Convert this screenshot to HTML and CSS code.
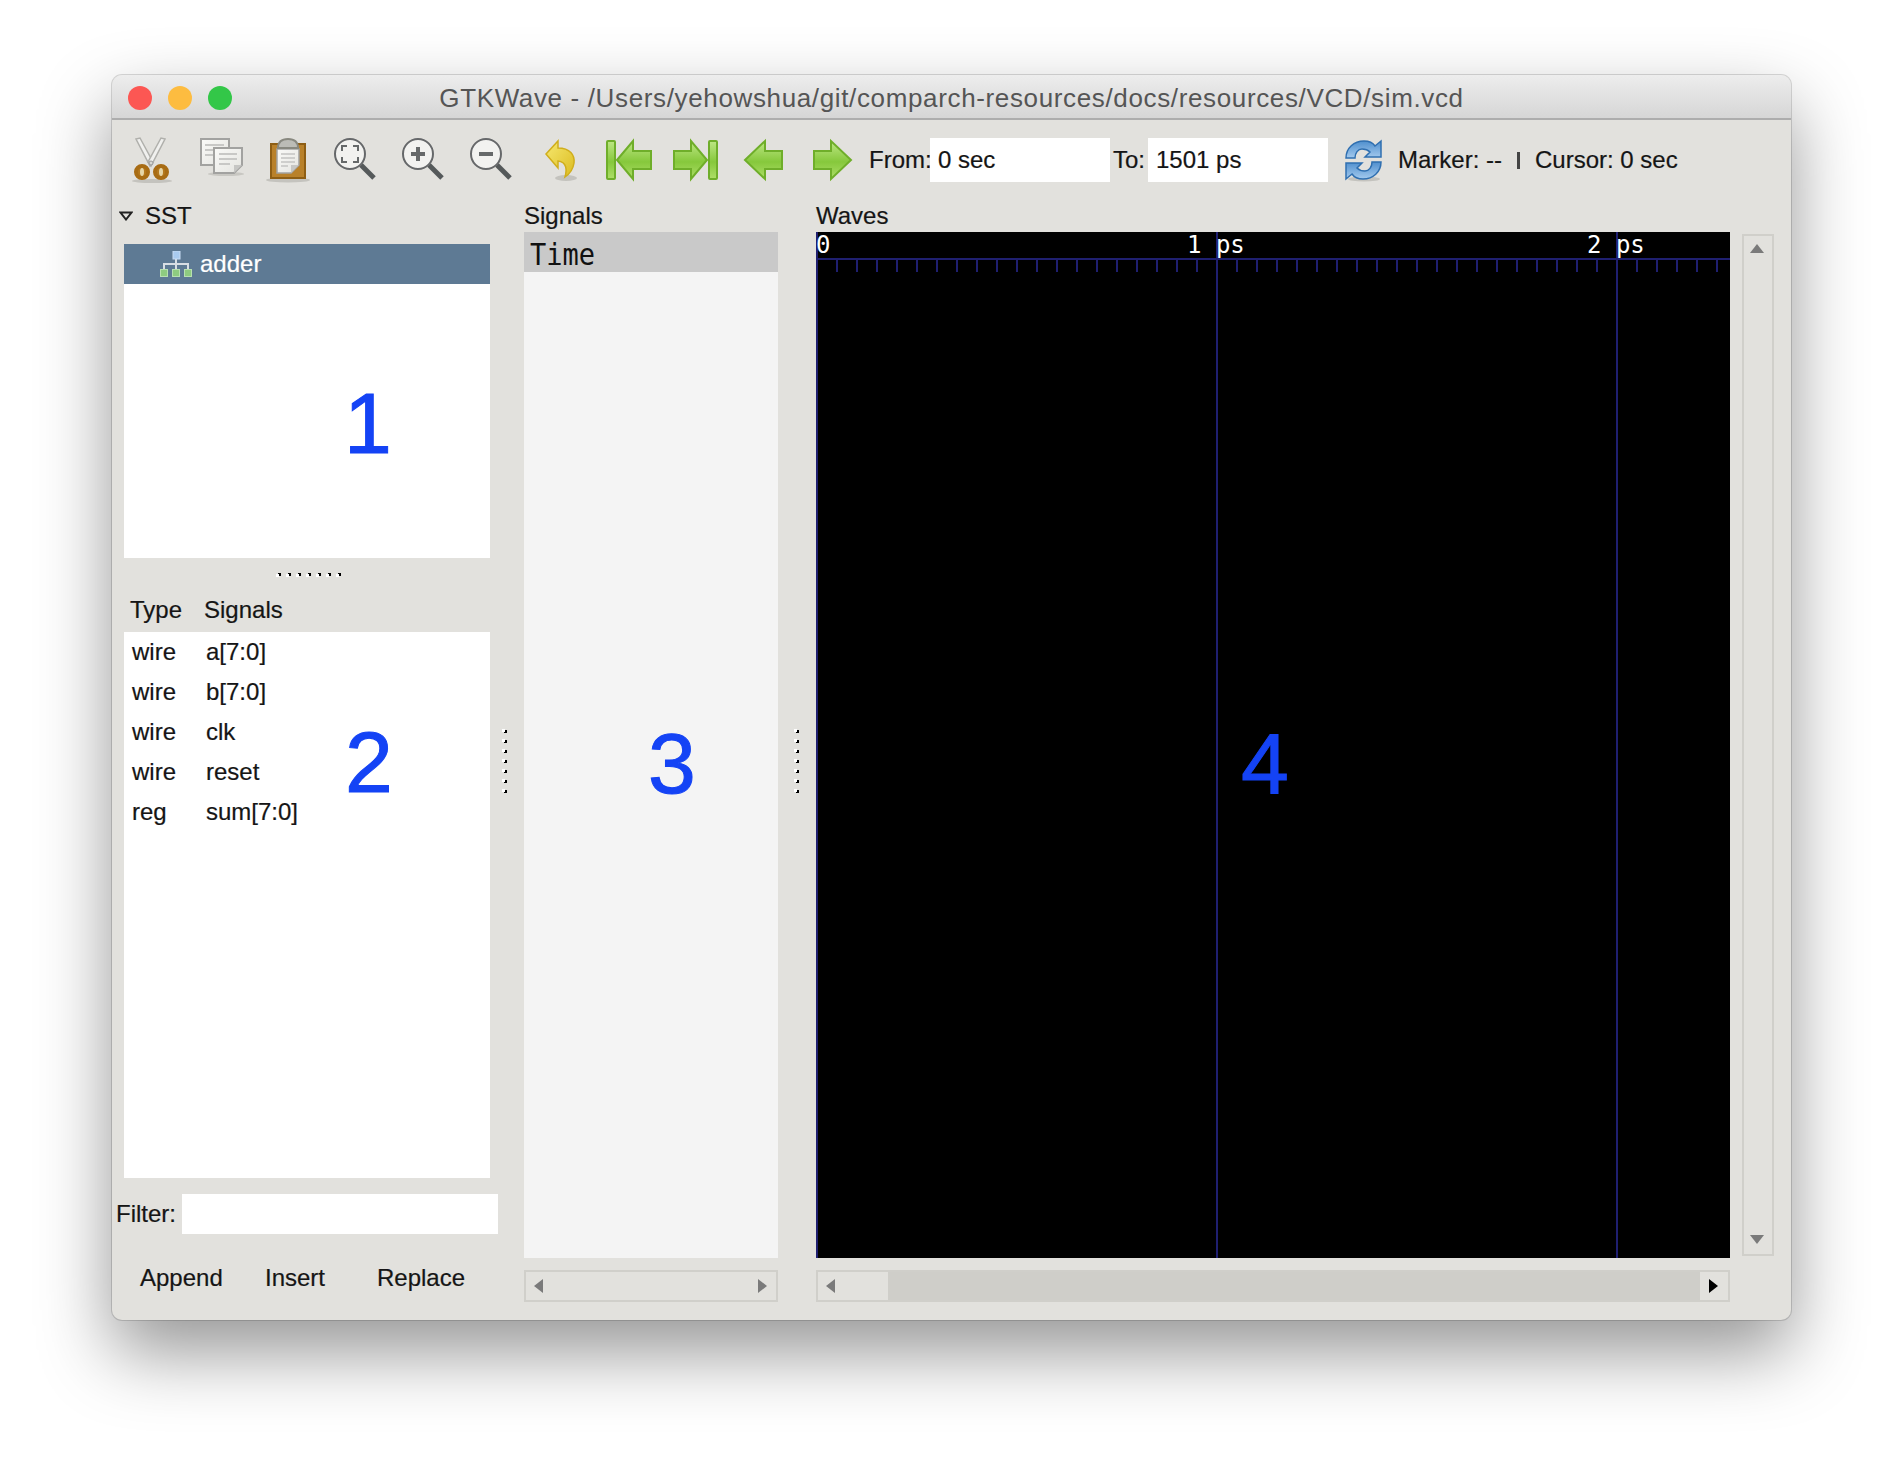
FILE: index.html
```html
<!DOCTYPE html>
<html>
<head>
  <title>GTKWave</title>
  <link rel="stylesheet" href="styles.css">
</head>
<body>
  <svg class="defs" width="0" height="0">
    <defs>
      <linearGradient id="green" x1="0" y1="0" x2="0" y2="1">
        <stop offset="0" stop-color="#bde684"/>
        <stop offset="0.55" stop-color="#86c83c"/>
        <stop offset="1" stop-color="#aede68"/>
      </linearGradient>
      <linearGradient id="yellow" x1="0" y1="0" x2="1" y2="1">
        <stop offset="0" stop-color="#f6e870"/>
        <stop offset="1" stop-color="#dcbc20"/>
      </linearGradient>
      <linearGradient id="blue" x1="0" y1="0" x2="0" y2="1">
        <stop offset="0" stop-color="#4f8fce"/>
        <stop offset="1" stop-color="#a4caee"/>
      </linearGradient>
      <linearGradient id="paper" x1="0" y1="0" x2="1" y2="1">
        <stop offset="0" stop-color="#fafaf8"/>
        <stop offset="1" stop-color="#e4e4e0"/>
      </linearGradient>
    </defs>
  </svg>

  <div class="window">
    <div class="titlebar">
      <div class="lights">
        <span class="light red"></span>
        <span class="light orange"></span>
        <span class="light green"></span>
      </div>
      <div class="title">GTKWave - /Users/yehowshua/git/comparch-resources/docs/resources/VCD/sim.vcd</div>
    </div>

    <div class="toolbar">
      <!-- cut -->
      <svg class="tool" viewBox="0 0 68 48">
        <ellipse cx="36" cy="45" rx="20" ry="2" fill="#c4c3be"/>
        <path d="M20 3 L24 2 L37 26 L34 30 Z" fill="#f0f0ee" stroke="#b0b0ac" stroke-width="1.5"/>
        <path d="M49 3 L45 2 L32 26 L35 30 Z" fill="#f0f0ee" stroke="#b0b0ac" stroke-width="1.5"/>
        <circle cx="35" cy="27" r="2" fill="#d8d8d4" stroke="#999"/>
        <ellipse cx="26" cy="36" rx="6" ry="6" fill="#b5791e" stroke="#a86c14" stroke-width="4"/>
        <ellipse cx="45" cy="36" rx="6" ry="6" fill="#b5791e" stroke="#a86c14" stroke-width="4"/>
        <ellipse cx="26" cy="36" rx="2" ry="4" fill="#e6d6a8"/>
        <ellipse cx="45" cy="36" rx="2" ry="4" fill="#e6d6a8"/>
      </svg>
      <!-- copy -->
      <svg class="tool" viewBox="0 0 68 48">
        <ellipse cx="42" cy="38" rx="18" ry="2" fill="#c8c7c2"/>
        <rect x="17" y="3" width="28" height="26" fill="url(#paper)" stroke="#a2a2a0" stroke-width="2"/>
        <path d="M21 9 H40 M21 14 H40 M21 19 H32" stroke="#c8c8c6" stroke-width="2"/>
        <path d="M30 12 H58 V29 L50 37 H30 Z" fill="url(#paper)" stroke="#a2a2a0" stroke-width="2"/>
        <path d="M50 37 V29 H58 Z" fill="#c6c6c4"/>
        <path d="M35 18 H53 M35 23 H53 M35 28 H46" stroke="#c8c8c6" stroke-width="2"/>
      </svg>
      <!-- paste -->
      <svg class="tool" viewBox="0 0 68 48">
        <ellipse cx="36" cy="44" rx="22" ry="2.5" fill="#c4c3be"/>
        <rect x="19" y="8" width="34" height="34" fill="#b9812a" stroke="#8e5e14" stroke-width="2"/>
        <path d="M25 13 H47 V29 L39 37 H25 Z" fill="url(#paper)" stroke="#a2a2a0" stroke-width="1.5"/>
        <path d="M39 37 V29 H47 Z" fill="#c6c6c4"/>
        <path d="M29 18 H43 M29 22 H43 M29 26 H43 M29 30 H36" stroke="#c4c4c2" stroke-width="1.5"/>
        <path d="M26 12 C26 5 31 3 36 3 C41 3 46 5 46 12 Z" fill="#bcbcb6" stroke="#88887f" stroke-width="2"/>
      </svg>
      <!-- zoom fit -->
      <svg class="tool" viewBox="0 0 68 48">
        <path d="M41 29 L54 42" stroke="#55595a" stroke-width="5"/>
        <circle cx="30" cy="18" r="15" fill="#f2f2f0" stroke="#66686a" stroke-width="2"/>
        <path d="M22 15 V10 H27 M33 10 H38 V15 M38 21 V26 H33 M27 26 H22 V21" fill="none" stroke="#66696a" stroke-width="2"/>
      </svg>
      <!-- zoom in -->
      <svg class="tool" viewBox="0 0 68 48">
        <path d="M41 29 L54 42" stroke="#55595a" stroke-width="5"/>
        <circle cx="30" cy="18" r="15" fill="#f2f2f0" stroke="#66686a" stroke-width="2"/>
        <path d="M23 18 H37 M30 11 V25" stroke="#66696a" stroke-width="4"/>
      </svg>
      <!-- zoom out -->
      <svg class="tool" viewBox="0 0 68 48">
        <path d="M41 29 L54 42" stroke="#55595a" stroke-width="5"/>
        <circle cx="30" cy="18" r="15" fill="#f2f2f0" stroke="#66686a" stroke-width="2"/>
        <path d="M23 18 H37" stroke="#66696a" stroke-width="4"/>
      </svg>
      <!-- undo -->
      <svg class="tool" viewBox="0 0 68 48">
        <ellipse cx="42" cy="42" rx="11" ry="3" fill="#c4c3be"/>
        <path d="M22 18 L34 5 V12 C46 12 51 19 50 27 C49 34 44 39 41 41 C43 34 43 26 34 25 V32 Z" fill="url(#yellow)" stroke="#d0ae1c" stroke-width="1.5"/>
      </svg>
      <!-- first -->
      <svg class="tool" viewBox="0 0 68 48">
        <rect x="15" y="5" width="8" height="38" rx="1" fill="url(#green)" stroke="#6fae2a" stroke-width="2"/>
        <path d="M25 24 L41 5 V15 H59 V33 H41 V43 Z" fill="url(#green)" stroke="#6fae2a" stroke-width="2"/>
      </svg>
      <!-- last -->
      <svg class="tool" viewBox="0 0 68 48">
        <rect x="49" y="5" width="8" height="38" rx="1" fill="url(#green)" stroke="#6fae2a" stroke-width="2"/>
        <path d="M14 15 H31 V5 L47 24 L31 43 V33 H14 Z" fill="url(#green)" stroke="#6fae2a" stroke-width="2"/>
      </svg>
      <!-- prev -->
      <svg class="tool" viewBox="0 0 68 48">
        <path d="M17 24 L37 5 V15 H54 V33 H37 V43 Z" fill="url(#green)" stroke="#6fae2a" stroke-width="2"/>
      </svg>
      <!-- next -->
      <svg class="tool" viewBox="0 0 68 48">
        <path d="M18 15 H35 V5 L55 24 L35 43 V33 H18 Z" fill="url(#green)" stroke="#6fae2a" stroke-width="2"/>
      </svg>

      <span class="from-label">From:</span>
      <div class="entry">0 sec</div>
      <span class="to-label">To:</span>
      <div class="entry">1501 ps</div>

      <svg class="refresh" width="40" height="44" viewBox="0 0 40 44">
        <ellipse cx="20" cy="41" rx="16" ry="2.5" fill="#c4c3be"/>
        <path d="M2 20 C2 10 10 3 20 3 C25 3 29 5 31 8 L37 3 V19 H21 L26 14 C24 12 21 11 18 11 C14 11 11 15 11 20 Z" fill="url(#blue)" stroke="#2f6fb0" stroke-width="1.5"/>
        <path d="M37 24 C37 34 29 41 19 41 C14 41 10 39 8 36 L2 41 V25 H18 L13 30 C15 32 18 33 21 33 C25 33 28 29 28 24 Z" fill="url(#blue)" stroke="#2f6fb0" stroke-width="1.5"/>
      </svg>
      <span class="marker">Marker: --</span>
      <span class="sep"></span>
      <span>Cursor: 0 sec</span>
    </div>

    <div class="main">
      <div class="sidebar">
        <div class="label sst-label">
          <svg class="expander" width="14" height="10" viewBox="0 0 14 10">
            <path d="M1.5 1.5 H12.5 L7 8.5 Z" fill="#e2e1dd" stroke="#222" stroke-width="2"/>
          </svg>
          SST
        </div>
        <div class="tree">
          <div class="tree-row">
            <svg class="hier" width="32" height="26" viewBox="0 0 32 26">
              <path d="M16 8 V13 M4 18 V13 H28 V18 M16 13 V18" fill="none" stroke="#d8dee4" stroke-width="2"/>
              <rect x="13" y="0" width="7" height="8" fill="#a9cbf0" stroke="#c8dcf4"/>
              <rect x="0.5" y="18.5" width="7" height="7" fill="#8ecb80" stroke="#b8e0b0"/>
              <rect x="12.5" y="18.5" width="7" height="7" fill="#8ecb80" stroke="#b8e0b0"/>
              <rect x="24.5" y="18.5" width="7" height="7" fill="#8ecb80" stroke="#b8e0b0"/>
            </svg>
            adder
          </div>
        </div>
        <div class="hgrip-row"><div class="hgrip"></div></div>
        <div class="list-head">
          <span class="col-type">Type</span>
          <span>Signals</span>
        </div>
        <div class="list">
          <div class="list-row"><span class="col-type">wire</span><span>a[7:0]</span></div>
          <div class="list-row"><span class="col-type">wire</span><span>b[7:0]</span></div>
          <div class="list-row"><span class="col-type">wire</span><span>clk</span></div>
          <div class="list-row"><span class="col-type">wire</span><span>reset</span></div>
          <div class="list-row"><span class="col-type">reg</span><span>sum[7:0]</span></div>
        </div>
        <div class="filter">
          <span>Filter:</span>
          <div class="filter-entry"></div>
        </div>
        <div class="buttons">
          <span>Append</span>
          <span>Insert</span>
          <span>Replace</span>
        </div>
      </div>

      <div class="gutter gutter-left"><div class="vgrip"></div></div>

      <div class="signals">
        <div class="label">Signals</div>
        <div class="signal-pane">
          <div class="time-row"><span class="mono-tall">Time</span></div>
        </div>
        <div class="hbar">
          <span class="arrow arrow-left"></span>
          <span class="arrow arrow-right"></span>
        </div>
      </div>

      <div class="gutter gutter-right"><div class="vgrip"></div></div>

      <div class="waves">
        <div class="label">Waves</div>
        <div class="wave-pane">
          <div class="ruler-line"></div>
          <div class="ruler-ticks"></div>
          <div class="major major-0"></div>
          <div class="major major-1"></div>
          <div class="major major-2"></div>
          <span class="tick-label label-0">0</span>
          <span class="tick-label label-1">1 ps</span>
          <span class="tick-label label-2">2 ps</span>
        </div>
        <div class="hbar hbar-wave">
          <div class="thumb"><span class="arrow arrow-left"></span></div>
          <div class="end-btn"><span class="arrow arrow-right arrow-black"></span></div>
        </div>
      </div>

      <div class="vcol">
        <div class="vbar">
          <span class="arrow arrow-up"></span>
          <span class="arrow arrow-down"></span>
        </div>
      </div>
    </div>

    <span class="big-num num-1">1</span>
    <span class="big-num num-2">2</span>
    <span class="big-num num-3">3</span>
    <span class="big-num num-4">4</span>
  </div>
</body>
</html>
```

FILE: styles.css
```css
html, body {
  margin: 0;
  background: #fff;
}
body {
  padding: 75px 111px 148px 112px;
  font-family: "Liberation Sans", Arial, sans-serif;
  font-size: 24px;
  color: #151515;
  -webkit-text-stroke: 0.2px;
}
.defs {
  position: absolute;
}
.window {
  position: relative;
  height: 1245px;
  display: flex;
  flex-direction: column;
  background: #e2e1dd;
  border-radius: 10px;
  box-shadow: 0 0 0 1px rgba(0, 0, 0, 0.14), 0 32px 72px rgba(0, 0, 0, 0.42);
  overflow: hidden;
}

/* title bar */
.titlebar {
  position: relative;
  height: 43px;
  flex: none;
  display: flex;
  align-items: center;
  justify-content: center;
  background: linear-gradient(#ededed, #d6d6d6);
  border-bottom: 2px solid #adadad;
}
.lights {
  position: absolute;
  left: 16px;
  top: 11px;
  display: flex;
  gap: 16px;
}
.light {
  width: 24px;
  height: 24px;
  border-radius: 50%;
}
.red { background: #fc5753; }
.orange { background: #fdbc40; }
.green { background: #33c748; }
.title {
  padding-top: 4px;
  color: #555;
  font-size: 26px;
  letter-spacing: 0.64px;
  -webkit-text-stroke: 0;
}

/* toolbar */
.toolbar {
  height: 80px;
  flex: none;
  display: flex;
  align-items: center;
  padding-left: 4px;
}
.tool {
  width: 68px;
  height: 48px;
  flex: none;
}
.from-label {
  margin-left: 5px;
  width: 61px;
}
.to-label {
  margin-left: 3px;
  width: 35px;
}
.entry {
  width: 172px;
  height: 44px;
  padding-left: 8px;
  background: #fff;
  line-height: 44px;
}
.refresh {
  margin: 0 14px 0 16px;
}
.sep {
  width: 3px;
  height: 17px;
  margin: 0 15px;
  background: #444;
}

/* panes */
.main {
  flex: 1;
  display: flex;
  padding: 0 17px 18px 4px;
  min-height: 0;
}
.label {
  height: 32px;
  line-height: 32px;
  flex: none;
}
.sidebar {
  width: 382px;
  flex: none;
  display: flex;
  flex-direction: column;
}
.sst-label {
  display: flex;
  align-items: center;
}
.expander {
  margin: 0 12px 0 3px;
}
.tree {
  height: 314px;
  margin: 12px 8px 0;
  background: #fff;
  flex: none;
}
.tree-row {
  height: 40px;
  display: flex;
  align-items: center;
  padding-left: 36px;
  background: #5e7a94;
  color: #fff;
}
.hier {
  margin-right: 8px;
}
.hgrip-row {
  height: 30px;
  padding: 15px 0 0 162px;
  box-sizing: border-box;
  flex: none;
}
.hgrip, .hgrip::before {
  width: 65px;
  height: 3px;
  background: repeating-linear-gradient(to right, #000 0 3px, transparent 3px 10px);
}
.hgrip {
  position: relative;
}
.hgrip::before {
  content: "";
  position: absolute;
  left: -2px;
  top: 1px;
  background: repeating-linear-gradient(to right, #fff 0 3px, transparent 3px 10px);
}
.list-head {
  height: 44px;
  display: flex;
  align-items: center;
  padding-left: 14px;
  flex: none;
}
.col-type {
  width: 74px;
}
.list {
  height: 546px;
  margin: 0 8px;
  background: #fff;
  flex: none;
}
.list-row {
  height: 40px;
  display: flex;
  align-items: center;
  padding-left: 8px;
}
.filter {
  height: 40px;
  margin-top: 16px;
  display: flex;
  align-items: center;
  flex: none;
}
.filter-entry {
  width: 316px;
  height: 40px;
  margin-left: 6px;
  background: #fff;
}
.buttons {
  height: 40px;
  margin-top: 24px;
  padding-left: 24px;
  display: grid;
  grid-template-columns: 125px 112px auto;
  align-items: center;
  flex: none;
}
.gutter {
  flex: none;
  padding-top: 22px;
  display: flex;
  align-items: center;
  box-sizing: border-box;
}
.gutter-left {
  width: 26px;
  padding-left: 6px;
}
.gutter-right {
  width: 38px;
  padding-left: 18px;
}
.vgrip, .vgrip::before {
  width: 3px;
  height: 65px;
  background: repeating-linear-gradient(to bottom, #000 0 3px, transparent 3px 10px);
}
.vgrip {
  position: relative;
}
.vgrip::before {
  content: "";
  position: absolute;
  left: -2px;
  top: -1px;
  background: repeating-linear-gradient(to bottom, #fff 0 3px, transparent 3px 10px);
}
.signals {
  width: 254px;
  flex: none;
  display: flex;
  flex-direction: column;
}
.signal-pane {
  flex: 1;
  background: #f4f4f4;
}
.time-row {
  height: 40px;
  padding-left: 6px;
  background: #c9c9c9;
  line-height: 46px;
  color: #111;
  overflow: hidden;
}
.mono-tall {
  display: inline-block;
  font-family: "DejaVu Sans Mono", monospace;
  font-size: 27px;
  transform: scaleY(1.12);
  -webkit-text-stroke: 0;
}
.waves {
  flex: 1;
  display: flex;
  flex-direction: column;
  min-width: 0;
}
.wave-pane {
  position: relative;
  flex: 1;
  background: #000;
  overflow: hidden;
}
.ruler-line {
  position: absolute;
  left: 0;
  right: 0;
  top: 26px;
  height: 2px;
  background: #1f1f70;
}
.ruler-ticks {
  position: absolute;
  left: 0;
  right: 0;
  top: 27px;
  height: 13px;
  background: repeating-linear-gradient(to right, #1f1f70 0 2px, transparent 2px 20px);
}
.major {
  position: absolute;
  top: 0;
  bottom: 0;
  width: 2px;
  background: #1f1f70;
}
.major-0 { left: 0; }
.major-1 { left: 400px; }
.major-2 { left: 800px; }
.tick-label {
  position: absolute;
  top: 0;
  color: #fff;
  font-family: "DejaVu Sans Mono", monospace;
  font-size: 24px;
  line-height: 26px;
  white-space: pre;
  -webkit-text-stroke: 0;
}
.label-0 { left: 0; }
.label-1 { left: 371px; }
.label-2 { left: 771px; }

/* scrollbars */
.hbar {
  position: relative;
  height: 32px;
  margin-top: 12px;
  box-sizing: border-box;
  border: 2px solid #d0cfca;
  background: #e2e1dd;
  flex: none;
}
.hbar-wave {
  display: flex;
  justify-content: space-between;
  background: #cfcec9;
}
.thumb {
  position: relative;
  width: 70px;
  background: #e2e1dd;
}
.end-btn {
  position: relative;
  width: 28px;
  background: #e2e1dd;
}
.arrow {
  position: absolute;
  width: 0;
  height: 0;
}
.arrow-left, .arrow-right {
  top: 7px;
  border-top: 7px solid transparent;
  border-bottom: 7px solid transparent;
}
.arrow-left {
  left: 8px;
  border-right: 9px solid #7a7a7a;
}
.arrow-right {
  right: 9px;
  border-left: 9px solid #7a7a7a;
}
.arrow-black {
  border-left-color: #000;
  right: 10px;
}
.vcol {
  width: 32px;
  margin-left: 12px;
  padding: 34px 0 46px;
  flex: none;
  display: flex;
}
.vbar {
  position: relative;
  flex: 1;
  border: 2px solid #d0cfca;
}
.arrow-up, .arrow-down {
  left: 6px;
  border-left: 7px solid transparent;
  border-right: 7px solid transparent;
}
.arrow-up {
  top: 8px;
  border-bottom: 9px solid #7a7a7a;
}
.arrow-down {
  bottom: 10px;
  border-top: 9px solid #7a7a7a;
}

/* blue annotation numbers */
.big-num {
  position: absolute;
  color: #1443f5;
  font-size: 86px;
  line-height: 1;
  -webkit-text-stroke: 1px;
}
.num-1 { left: 232px; top: 305px; }
.num-2 { left: 233px; top: 644px; }
.num-3 { left: 536px; top: 645px; }
.num-4 { left: 1129px; top: 645px; }
```
